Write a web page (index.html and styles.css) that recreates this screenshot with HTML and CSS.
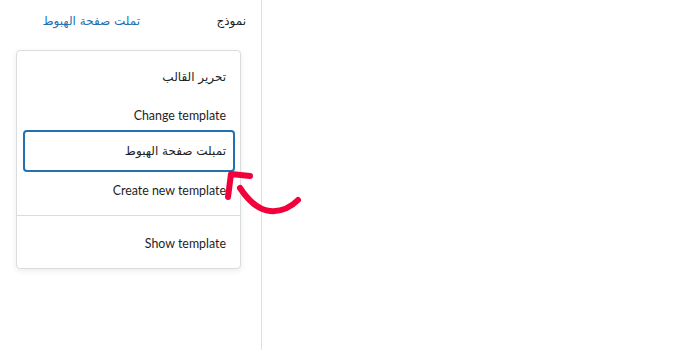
FILE: index.html
```html
<!DOCTYPE html>
<html lang="ar">
<head>
<meta charset="utf-8">
<link rel="stylesheet" href="styles.css">
</head>
<body>
<div class="page">
  <aside class="sidebar">
    <div class="row" dir="rtl">
      <span class="label ar">نموذج</span>
      <a class="link ar" href="#">تملت صفحة الهبوط</a>
    </div>
    <div class="menu" dir="rtl">
      <div class="group">
        <div class="item ar">تحرير القالب</div>
        <div class="item">Change template</div>
        <div class="item focus ar">تمبلت صفحة الهبوط</div>
        <div class="item">Create new template</div>
      </div>
      <div class="group sep">
        <div class="item">Show template</div>
      </div>
    </div>
  </aside>
  <main class="canvas"></main>
</div>
<svg class="arrow" width="90" height="60" viewBox="0 0 90 60">
  <path d="M13 37 L16 14 L35 16" fill="none" stroke="#f2003c" stroke-width="6" stroke-linecap="round" stroke-linejoin="round"/>
  <path d="M25 28 C33 40 43 50 55 51 C66 52 76 47 83 40" fill="none" stroke="#f2003c" stroke-width="6" stroke-linecap="round"/>
</svg>
</body>
</html>
```
FILE: styles.css
```css
html, body {
  margin: 0;
  padding: 0;
  background: #fff;
}
body {
  font-family: Lato, "DejaVu Sans", sans-serif;
  font-size: 12.4px;
  color: #1e1e1e;
  width: 700px;
  height: 350px;
  overflow: hidden;
  position: relative;
}
.ar {
  font-family: "DejaVu Sans", sans-serif;
  font-size: 12px;
}
.page {
  display: flex;
  height: 350px;
}
.sidebar {
  flex-shrink: 0;
  border-right: 1px solid #e0e0e0;
  padding: 0 20px 0 16px;
  width: 225px;
}
.row {
  display: flex;
  align-items: center;
  height: 42px;
  margin-right: -5px;
  padding-bottom: 8px;
}
.label {
  width: 106px;
  flex-shrink: 0;
  text-align: right;
}
.link {
  color: #2271b1;
  text-decoration: none;
}
.menu {
  border: 1px solid #dcdcde;
  border-radius: 4px;
  box-shadow: 0 2px 6px rgba(0,0,0,0.08);
  background: #fff;
}
.group {
  padding: 7px 0 6px;
}
.sep {
  border-top: 1px solid #dcdcde;
  padding-top: 8px;
}
.item {
  height: 38px;
  display: flex;
  align-items: center;
  padding: 0 14px;
}
.item.focus {
  margin: -2px 7px 1px 8px;
  padding: 0 7px;
  box-shadow: 0 0 0 2px #2271b1;
  border-radius: 2px;
}
.canvas {
  flex: 1;
}
.arrow {
  position: absolute;
  left: 215px;
  top: 160px;
}
```
